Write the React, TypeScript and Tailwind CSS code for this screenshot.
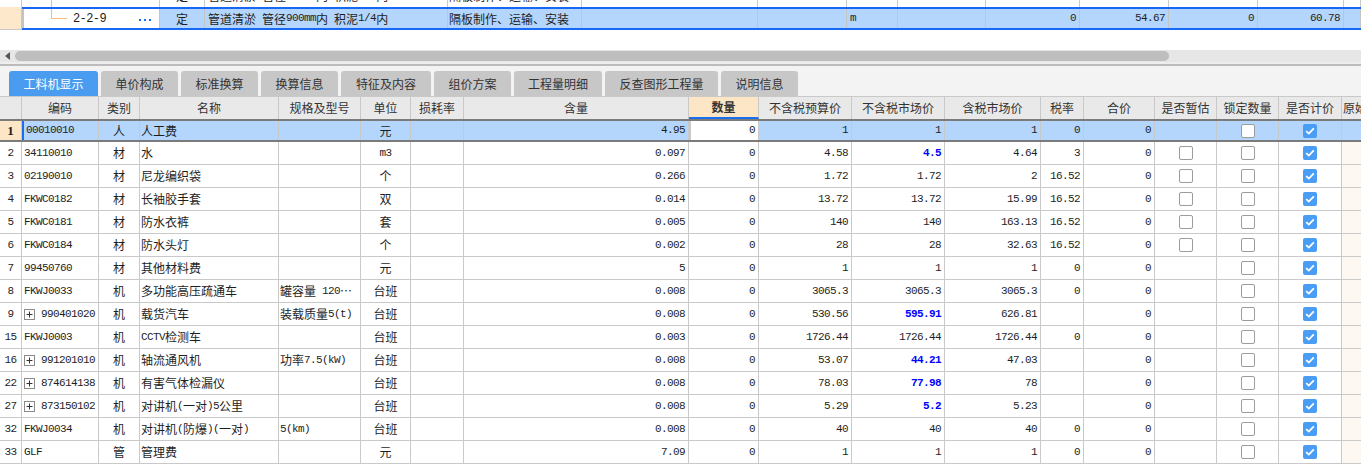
import React from 'react';

const mono = "font-['Liberation_Mono',monospace] text-[11px] tracking-[-0.6px]";
const line = 'border-[#c9c9c9]';

type Row = {
  n: string;
  code: string;
  plus?: boolean;
  type: string;
  name: string;
  spec?: string;
  unit: string;
  amount: string;
  budget: string;
  market: string;
  blue?: boolean;
  taxMarket: string;
  rate: string;
  est?: boolean;
};

const rows: Row[] = [
  { n: '1', code: '00010010', type: '人', name: '人工费', unit: '元', amount: '4.95', budget: '1', market: '1', taxMarket: '1', rate: '0' },
  { n: '2', code: '34110010', type: '材', name: '水', unit: 'm3', amount: '0.097', budget: '4.58', market: '4.5', blue: true, taxMarket: '4.64', rate: '3', est: true },
  { n: '3', code: '02190010', type: '材', name: '尼龙编织袋', unit: '个', amount: '0.266', budget: '1.72', market: '1.72', taxMarket: '2', rate: '16.52', est: true },
  { n: '4', code: 'FKWC0182', type: '材', name: '长袖胶手套', unit: '双', amount: '0.014', budget: '13.72', market: '13.72', taxMarket: '15.99', rate: '16.52', est: true },
  { n: '5', code: 'FKWC0181', type: '材', name: '防水衣裤', unit: '套', amount: '0.005', budget: '140', market: '140', taxMarket: '163.13', rate: '16.52', est: true },
  { n: '6', code: 'FKWC0184', type: '材', name: '防水头灯', unit: '个', amount: '0.002', budget: '28', market: '28', taxMarket: '32.63', rate: '16.52', est: true },
  { n: '7', code: '99450760', type: '材', name: '其他材料费', unit: '元', amount: '5', budget: '1', market: '1', taxMarket: '1', rate: '0' },
  { n: '8', code: 'FKWJ0033', type: '机', name: '多功能高压疏通车', spec: '罐容量 120…', unit: '台班', amount: '0.008', budget: '3065.3', market: '3065.3', taxMarket: '3065.3', rate: '0' },
  { n: '9', code: '990401020', plus: true, type: '机', name: '载货汽车', spec: '装载质量5(t)', unit: '台班', amount: '0.008', budget: '530.56', market: '595.91', blue: true, taxMarket: '626.81', rate: '' },
  { n: '15', code: 'FKWJ0003', type: '机', name: 'CCTV检测车', unit: '台班', amount: '0.003', budget: '1726.44', market: '1726.44', taxMarket: '1726.44', rate: '0' },
  { n: '16', code: '991201010', plus: true, type: '机', name: '轴流通风机', spec: '功率7.5(kW)', unit: '台班', amount: '0.008', budget: '53.07', market: '44.21', blue: true, taxMarket: '47.03', rate: '' },
  { n: '22', code: '874614138', plus: true, type: '机', name: '有害气体检漏仪', unit: '台班', amount: '0.008', budget: '78.03', market: '77.98', blue: true, taxMarket: '78', rate: '' },
  { n: '27', code: '873150102', plus: true, type: '机', name: '对讲机(一对)5公里', unit: '台班', amount: '0.008', budget: '5.29', market: '5.2', blue: true, taxMarket: '5.23', rate: '' },
  { n: '32', code: 'FKWJ0034', type: '机', name: '对讲机(防爆)(一对)', spec: '5(km)', unit: '台班', amount: '0.008', budget: '40', market: '40', taxMarket: '40', rate: '0' },
  { n: '33', code: 'GLF', type: '管', name: '管理费', unit: '元', amount: '7.09', budget: '1', market: '1', taxMarket: '1', rate: '0' },
];

const tabs = [
  { label: '工料机显示', w: 'w-[89px]' },
  { label: '单价构成', w: 'w-[77px]' },
  { label: '标准换算', w: 'w-[77px]' },
  { label: '换算信息', w: 'w-[77px]' },
  { label: '特征及内容', w: 'w-[90px]' },
  { label: '组价方案', w: 'w-[77px]' },
  { label: '工程量明细', w: 'w-[88px]' },
  { label: '反查图形工程量', w: 'w-[113px]' },
  { label: '说明信息', w: 'w-[77px]' },
];

// ASCII runs get the narrow monospace face, CJK runs the sans face
function Mixed({ text }: { text: string }) {
  const parts = text.match(/[\x20-\x7e]+|[^\x20-\x7e]+/g) ?? [];
  return (
    <>
      {parts.map((p, i) =>
        /^[\x20-\x7e]/.test(p) ? (
          <span key={i} className={`${mono} whitespace-pre`}>{p}</span>
        ) : (
          <span key={i}>{p}</span>
        )
      )}
    </>
  );
}

function Box({ checked }: { checked?: boolean }) {
  if (checked) {
    return (
      <span className="w-[14px] h-[14px] rounded-[2px] bg-[#4a9df5] flex items-center justify-center">
        <svg width="10" height="8" viewBox="0 0 10 8">
          <path d="M1.2 4.2 L3.8 6.6 L8.8 1.4" fill="none" stroke="white" strokeWidth="1.8" />
        </svg>
      </span>
    );
  }
  return <span className="w-[14px] h-[14px] rounded-[2px] border border-[#9c9c9c] bg-white" />;
}

function Plus() {
  return (
    <svg width="11" height="11" viewBox="0 0 11 11" className="shrink-0 mr-[6px]">
      <rect x="0.5" y="0.5" width="10" height="10" fill="white" stroke="#8a8a8a" />
      <path d="M2.5 5.5 H8.5 M5.5 2.5 V8.5" stroke="#333" strokeWidth="1" />
    </svg>
  );
}

const cell = `h-full shrink-0 border-r ${line} flex items-center overflow-hidden whitespace-nowrap`;

function BodyRow({ r, first }: { r: Row; first: boolean }) {
  const bg = first ? 'bg-[#b5d6fc]' : '';
  return (
    <div className={`flex h-[23px] ${first ? 'border-y-2 border-[#7b7b7b]' : `border-b ${line}`}`}>
      <div
        className={`${cell} w-[22px] justify-center ${
          first ? "bg-[#fde6c6] font-['Liberation_Serif',serif] font-bold text-[13px]" : `bg-white ${mono}`
        }`}
      >
        {r.n}
      </div>
      <div className={`${cell} w-[77px] pl-[2px] ${bg} ${first ? 'border-l-2 border-l-[#1a6ff0]' : ''}`}>
        {r.plus && <Plus />}
        <span className={mono}>{r.code}</span>
      </div>
      <div className={`${cell} w-[41px] justify-center ${bg}`}>{r.type}</div>
      <div className={`${cell} w-[139px] pl-[1px] ${bg}`}>
        <Mixed text={r.name} />
      </div>
      <div className={`${cell} w-[82px] pl-[1px] ${bg}`}>{r.spec && <Mixed text={r.spec} />}</div>
      <div className={`${cell} w-[50px] justify-center ${bg}`}>
        <Mixed text={r.unit} />
      </div>
      <div className={`${cell} w-[53px] ${bg}`} />
      <div className={`${cell} w-[225px] justify-end pr-[3px] ${mono} ${bg}`}>{r.amount}</div>
      <div
        className={`${cell} w-[70px] justify-end pr-[3px] ${mono} ${
          first ? 'bg-white border-x-2 border-[#7b7b7b]' : ''
        }`}
      >
        0
      </div>
      <div className={`${cell} w-[93px] justify-end pr-[3px] ${mono} ${bg}`}>{r.budget}</div>
      <div
        className={`${cell} w-[93px] justify-end pr-[3px] ${mono} ${bg} ${
          r.blue ? 'text-[#0000ff] font-bold' : ''
        }`}
      >
        {r.market}
      </div>
      <div className={`${cell} w-[96px] justify-end pr-[3px] ${mono} ${bg}`}>{r.taxMarket}</div>
      <div className={`${cell} w-[43px] justify-end pr-[3px] ${mono} ${bg}`}>{r.rate}</div>
      <div className={`${cell} w-[71px] justify-end pr-[3px] ${mono} ${bg}`}>0</div>
      <div className={`${cell} w-[62px] justify-center ${bg}`}>{r.est && <Box />}</div>
      <div className={`${cell} w-[62px] justify-center ${bg}`}>
        <Box />
      </div>
      <div className={`${cell} w-[63px] justify-center ${bg}`}>
        <Box checked />
      </div>
      <div className={`${cell} w-[80px] ${first ? bg : 'bg-[#fdf8f2]'}`} />
    </div>
  );
}

const headers: { label: string; w: string; left?: boolean }[] = [
  { label: '', w: 'w-[22px]' },
  { label: '编码', w: 'w-[77px]' },
  { label: '类别', w: 'w-[41px]' },
  { label: '名称', w: 'w-[139px]' },
  { label: '规格及型号', w: 'w-[82px]' },
  { label: '单位', w: 'w-[50px]' },
  { label: '损耗率', w: 'w-[53px]' },
  { label: '含量', w: 'w-[225px]' },
  { label: '数量', w: 'w-[70px]' },
  { label: '不含税预算价', w: 'w-[93px]' },
  { label: '不含税市场价', w: 'w-[93px]' },
  { label: '含税市场价', w: 'w-[96px]' },
  { label: '税率', w: 'w-[43px]' },
  { label: '合价', w: 'w-[71px]' },
  { label: '是否暂估', w: 'w-[62px]' },
  { label: '锁定数量', w: 'w-[62px]' },
  { label: '是否计价', w: 'w-[63px]' },
  { label: '原始含量', w: 'w-[80px]', left: true },
];

function TopRow({ selected }: { selected: boolean }) {
  const c = `h-full shrink-0 border-r ${selected ? 'border-[#c4c4c4]' : line} flex items-center overflow-hidden whitespace-nowrap`;
  const code = selected ? '2-2-9' : '2-2-8';
  const name = selected ? '管道清淤 管径900mm内 积泥1/4内' : '管道清淤 管径800mm内 积泥1/4内';
  return (
    <div className="flex h-[23px] shrink-0">
      <div className={`w-[22px] h-full shrink-0 border-r ${line} ${selected ? `bg-[#fde8cc] border-b` : 'bg-white'}`} />
      <div
        className={`flex flex-1 h-full ${selected ? 'border-y-2 border-[#1769f5] bg-[#b5d6fc]' : 'bg-white'}`}
      >
        <div
          className={`${c} w-[138px] bg-white items-start ${
            selected ? 'border-x-2 border-[#1769f5]' : `pl-[2px]`
          }`}
        >
          <div className="w-[27px] shrink-0" />
          <div className={`w-[16px] shrink-0 border-l border-[#f6bd78] ${selected ? 'h-[10px] border-b' : 'h-full'}`} />
          <span className={`${mono} self-center ml-[6px] text-[12px]`}>{code}</span>
          {selected && (
            <span className="self-center ml-auto mr-[8px] flex gap-[3px] pt-[2px]">
              <span className="w-[2px] h-[2px] bg-[#1a6ff0]" />
              <span className="w-[2px] h-[2px] bg-[#1a6ff0]" />
              <span className="w-[2px] h-[2px] bg-[#1a6ff0]" />
            </span>
          )}
        </div>
        <div className={`${c} w-[45px] justify-center`}>定</div>
        <div className={`${c} w-[243px] pl-[3px]`}>
          <Mixed text={name} />
        </div>
        <div className={`${c} w-[134px] pl-[1px]`}>隔板制作、运输、安装</div>
        <div className={`${c} w-[176px]`} />
        <div className={`${c} w-[89px]`} />
        <div className={`${c} w-[51px] pl-[3px] ${mono}`}>m</div>
        <div className={`${c} w-[88px]`} />
        <div className={`${c} w-[94px] justify-end pr-[3px] ${mono}`}>0</div>
        <div className={`${c} w-[89px] justify-end pr-[3px] ${mono}`}>{selected ? '54.67' : '48.73'}</div>
        <div className={`${c} w-[89px] justify-end pr-[3px] ${mono}`}>0</div>
        <div className={`${c} w-[86px] justify-end pr-[3px] ${mono}`}>{selected ? '60.78' : '54.17'}</div>
        <div className={`${c} flex-1`} />
      </div>
    </div>
  );
}

export default function App() {
  return (
    <div className="w-[1361px] h-[465px] overflow-hidden bg-white text-[12px] text-[#1e1e1e] font-['Noto_Sans_CJK_SC',sans-serif] leading-none">
      {/* upper grid, cut off */}
      <div className="h-[7px] overflow-hidden flex flex-col justify-end">
        <TopRow selected={false} />
      </div>
      <TopRow selected />
      <div className="h-[20px] bg-white" />

      {/* horizontal scrollbar */}
      <div className="h-[12px] bg-[#e6e6e6] flex items-center">
        <svg width="5" height="8" viewBox="0 0 5 8" className="ml-[5px]">
          <path d="M5 0 L0 4 L5 8 Z" fill="#555" />
        </svg>
        <div className="ml-[5px] w-[1154px] h-[10px] rounded-[5px] bg-[#bebebe]" />
      </div>
      <div className="h-[2px] bg-[#eeeeee]" />
      <div className="h-[2px] bg-[#bcbcbc]" />

      {/* tabs */}
      <div className="h-[30px] bg-[#f3f3f3] pl-[9px] flex items-end gap-[3px]">
        {tabs.map((t, i) => (
          <div
            key={t.label}
            className={`${t.w} h-[25px] rounded-t-[3px] flex items-center justify-center text-[12px] ${
              i === 0 ? 'bg-[#4a9cf1] text-white' : 'bg-[#c7c7c7] text-[#333]'
            }`}
          >
            {t.label}
          </div>
        ))}
      </div>

      {/* lower grid header */}
      <div className={`flex h-[23px] border-t ${line} bg-[#e9e9e9]`}>
        {headers.map((h, i) => (
          <div
            key={i}
            className={`h-full shrink-0 border-r ${line} flex items-center whitespace-nowrap overflow-hidden text-[#333] ${h.w} ${
              h.left ? 'pl-[1px]' : 'justify-center'
            } ${h.label === '数量' ? 'bg-[#fde6c6] font-bold text-[#111] border-b-2 border-b-[#1a6ff0]' : ''}`}
          >
            {h.label}
          </div>
        ))}
      </div>

      {rows.map((r, i) => (
        <BodyRow key={r.n} r={r} first={i === 0} />
      ))}
    </div>
  );
}
